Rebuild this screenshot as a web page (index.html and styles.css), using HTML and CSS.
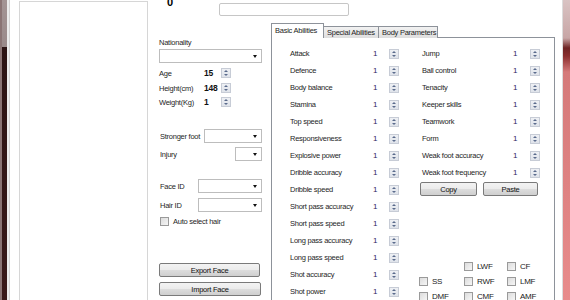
FILE: index.html
```html
<!DOCTYPE html>
<html lang="en">
<head>
    <meta charset="UTF-8">
    <title>Player Editor</title>
    <link rel="stylesheet" href="styles.css">
</head>
<body>
    <div class="window">
        <div class="frame-left"></div>

        <div class="form">
            <div class="preview"></div>

            <div class="main">
                <div class="topline">
                    <span class="number">0</span>
                    <input type="text" class="name-box">
                </div>

                <div class="cols">
                    <div class="side">
                        <div class="label nat-label">Nationality</div>
                        <div class="select wide"></div>

                        <div class="stat age"><span class="label">Age</span><b>15</b><span class="spin"></span></div>
                        <div class="stat"><span class="label">Height(cm)</span><b>148</b><span class="spin"></span></div>
                        <div class="stat"><span class="label">Weight(Kg)</span><b>1</b><span class="spin"></span></div>

                        <div class="field foot"><span class="label">Stronger foot</span><div class="select s58"></div></div>
                        <div class="field injury"><span class="label">Injury</span><div class="select s27"></div></div>

                        <div class="field face"><span class="label">Face ID</span><div class="select s64"></div></div>
                        <div class="field hair"><span class="label">Hair ID</span><div class="select s64"></div></div>
                        <div class="check auto"><span class="box"></span><span class="label">Auto select hair</span></div>

                        <button class="btn face-btn">Export Face</button>
                        <button class="btn face-btn import">Import Face</button>
                    </div>

                    <div class="tabs">
                        <div class="tab-strip">
                            <div class="tab active">Basic Abilities</div>
                            <div class="tab">Special Abilities</div>
                            <div class="tab">Body Parameters</div>
                        </div>
                        <div class="tab-page">
                            <div class="col-left" id="colLeft"></div>
                            <div class="col-right">
                                <div id="colRight"></div>
                                <div class="copy-row">
                                    <button class="btn copy">Copy</button>
                                    <button class="btn paste">Paste</button>
                                </div>
                                <div class="positions">
                                    <span></span>
                                    <div class="check"><span class="box"></span>LWF</div>
                                    <div class="check"><span class="box"></span>CF</div>
                                    <div class="check"><span class="box"></span>SS</div>
                                    <div class="check"><span class="box"></span>RWF</div>
                                    <div class="check"><span class="box"></span>LMF</div>
                                    <div class="check"><span class="box"></span>DMF</div>
                                    <div class="check"><span class="box"></span>CMF</div>
                                    <div class="check"><span class="box"></span>AMF</div>
                                </div>
                            </div>
                        </div>
                    </div>
                </div>
            </div>
        </div>

        <div class="frame-right"></div>
    </div>

    <script>
        const leftStats = ['Attack', 'Defence', 'Body balance', 'Stamina', 'Top speed',
            'Responsiveness', 'Explosive power', 'Dribble accuracy', 'Dribble speed',
            'Short pass accuracy', 'Short pass speed', 'Long pass accuracy',
            'Long pass speed', 'Shot accuracy', 'Shot power'];
        const rightStats = ['Jump', 'Ball control', 'Tenacity', 'Keeper skills',
            'Teamwork', 'Form', 'Weak foot accuracy', 'Weak foot frequency'];

        function fillColumn(id, names) {
            const col = document.getElementById(id);
            names.forEach(name => {
                const row = document.createElement('div');
                row.className = 'ability';
                row.innerHTML = `<span class="label">${name}</span><span class="val">1</span><span class="spin"></span>`;
                col.appendChild(row);
            });
        }

        fillColumn('colLeft', leftStats);
        fillColumn('colRight', rightStats);
    </script>
</body>
</html>
```

FILE: styles.css
```css
body {
    margin: 0;
    font-family: "Liberation Sans", Arial, sans-serif;
    font-size: 7.5px;
    letter-spacing: -0.25px;
    color: #1e1e1e;
    overflow: hidden;
}

.window {
    display: flex;
    width: 570px;
    height: 300px;
    overflow: hidden;
}

.frame-left {
    width: 9px;
    flex-shrink: 0;
    box-sizing: border-box;
    border-left: 2px solid #8a7474;
    border-right: 2px solid #ececec;
    background: linear-gradient(to bottom, #a39494 0, #9a8a8a 47px, #2c1414 47px, #3a1a1a 100%);
}

.frame-right {
    width: 8px;
    flex-shrink: 0;
    border-left: 1px solid #dcdcdc;
    box-sizing: border-box;
    background: linear-gradient(to bottom, #d9c3c3 0, #c8a6a6 38px, #6e2424 48px, #8a2e2e 56px, #d57a7a 72px, #e88b8b 100%);
}

.form {
    flex: 1;
    display: flex;
    background: #fff;
    border-left: 1px solid #d4d4d4;
    padding-left: 9px;
}

.preview {
    width: 127px;
    height: 330px;
    margin-top: 1px;
    border: 1px solid #d6d6d6;
    border-bottom: none;
    flex-shrink: 0;
}

.main {
    margin-left: 11px;
    display: flex;
    flex-direction: column;
}

.topline {
    height: 24px;
    flex-shrink: 0;
    display: flex;
    align-items: flex-start;
}

.number {
    margin: -3px 0 0 8px;
    font-size: 11px;
    font-weight: bold;
    color: #000;
    line-height: 10px;
}

.name-box {
    margin: 3px 0 0 46px;
    width: 130px;
    height: 13px;
    box-sizing: border-box;
    border: 1px solid #c6c6c6;
    border-radius: 2px;
    padding: 0;
}

.cols {
    display: flex;
    flex-shrink: 0;
}

/* middle column */
.side {
    width: 103px;
    margin-right: 9px;
    display: flex;
    flex-direction: column;
}

.label {
    white-space: nowrap;
}

.nat-label {
    margin-top: 14px;
    line-height: 10px;
}

.select {
    height: 14px;
    box-sizing: border-box;
    border: 1px solid #bdbdbd;
    background: #fff;
    position: relative;
}

.select::after {
    content: "";
    position: absolute;
    right: 4px;
    top: 5px;
    border-left: 2.5px solid transparent;
    border-right: 2.5px solid transparent;
    border-top: 3px solid #111;
}

.wide {
    margin-top: 1px;
    width: 103px;
}

.s58 { width: 58px; }
.s27 { width: 27px; }
.s64 { width: 64px; }

.stat {
    display: flex;
    align-items: center;
    height: 14px;
}

.stat .label {
    width: 45px;
}

.stat b {
    width: 17px;
    font-size: 8.5px;
    color: #111;
}

.age {
    margin-top: 2px;
    height: 16px;
}

.field {
    display: flex;
    align-items: center;
    justify-content: space-between;
}

.foot { margin-top: 20px; }
.injury { margin-top: 5px; height: 12px; }
.face { margin-top: 19px; }
.hair { margin-top: 5px; }

.field .label {
    margin-left: 1px;
}

.check {
    display: flex;
    align-items: center;
    white-space: nowrap;
    font-size: 8px;
}

.box {
    width: 9px;
    height: 9px;
    box-sizing: border-box;
    border: 1px solid #9a9a9a;
    background: linear-gradient(135deg, #dcdcdc, #f6f6f6);
    margin-right: 4px;
    flex-shrink: 0;
}

.auto {
    margin: 5px 0 0 1px;
    font-size: 7.5px;
}

.btn {
    font-family: "Liberation Sans", Arial, sans-serif;
    font-size: 7.5px;
    letter-spacing: -0.25px;
    color: #111;
    border: 1px solid #7a7a7a;
    border-radius: 2px;
    background: linear-gradient(to bottom, #f3f3f3 0, #ebebeb 50%, #dddddd 50%, #cfcfcf 100%);
    padding: 0;
    height: 14px;
    box-sizing: border-box;
}

.face-btn {
    width: 101px;
    margin-top: 37px;
}

.face-btn.import {
    margin-top: 5px;
    width: 102px;
}

/* tab control */
.tabs {
    width: 284px;
    display: flex;
    flex-direction: column;
}

.tab-strip {
    display: flex;
    align-items: flex-end;
    height: 14px;
    position: relative;
    z-index: 1;
}

.tab {
    height: 11px;
    line-height: 11px;
    padding: 0 3px;
    border: 1px solid #8d929a;
    border-bottom: none;
    background: linear-gradient(to bottom, #f2f2f2, #dedede);
    margin-left: -1px;
    white-space: nowrap;
}

.tab.active {
    height: 14px;
    line-height: 13px;
    background: #fff;
    margin-left: 0;
    padding: 0 2px 0 3px;
    width: 46px;
}

.tab:nth-child(2) { width: 48px; }
.tab:nth-child(3) { width: 52px; }

.tab-page {
    height: 280px;
    border: 1px solid #8d929a;
    margin-top: -1px;
    display: flex;
    padding: 7px 0 0 18px;
}

.col-left {
    width: 109px;
    margin-right: 23px;
}

.col-right {
    width: 118px;
    display: flex;
    flex-direction: column;
}

.ability {
    display: flex;
    align-items: center;
    height: 17px;
}

.ability .label {
    flex: 1;
}

.val {
    width: 16px;
    color: #2e1d5e;
    font-size: 8px;
}

.col-right .val {
    width: 17px;
}

.spin {
    width: 10px;
    height: 10px;
    box-sizing: border-box;
    border: 1px solid #c7ccd6;
    background: linear-gradient(to bottom, #eef0f4, #dfe3ea);
    position: relative;
    flex-shrink: 0;
}

.spin::before,
.spin::after {
    content: "";
    position: absolute;
    left: 2px;
    border-left: 2px solid transparent;
    border-right: 2px solid transparent;
}

.spin::before {
    top: 1px;
    border-bottom: 2px solid #5a6b8c;
}

.spin::after {
    top: 5px;
    border-top: 2px solid #5a6b8c;
}

.copy-row {
    display: flex;
    margin-top: 1px;
    margin-left: -2px;
}

.copy {
    width: 57px;
}

.paste {
    width: 55px;
    margin-left: 6px;
}

.positions {
    margin: 63px 0 0 -3px;
    display: grid;
    grid-template-columns: 45px 43px 30px;
    grid-auto-rows: 15px;
    font-size: 8px;
    color: #222;
}
```
